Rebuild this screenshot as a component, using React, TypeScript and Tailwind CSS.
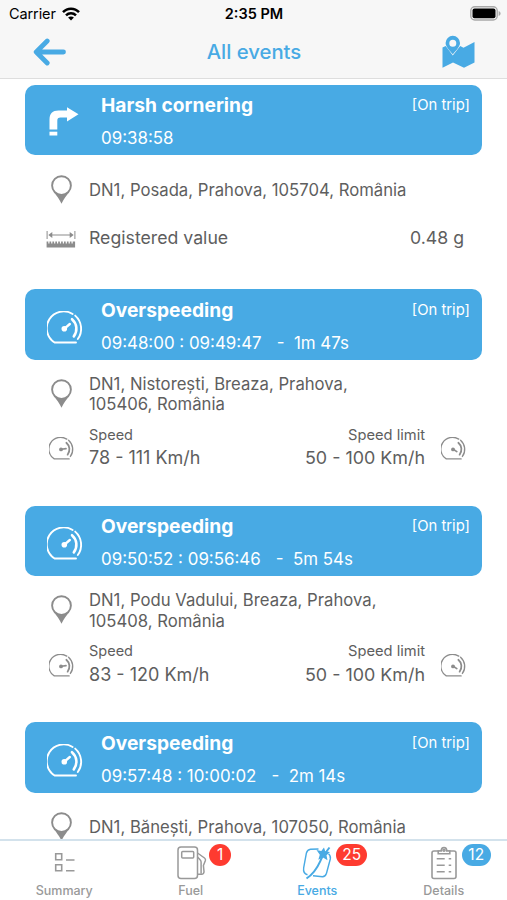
import type { ReactNode } from "react";

type EventItem = {
  type: "cornering" | "speeding";
  title: string;
  time: string;
  duration?: string;
  address: string[];
  registered?: string;
  speed?: string;
  limit?: string;
};

const events: EventItem[] = [
  {
    type: "cornering",
    title: "Harsh cornering",
    time: "09:38:58",
    address: ["DN1, Posada, Prahova, 105704, România"],
    registered: "0.48 g",
  },
  {
    type: "speeding",
    title: "Overspeeding",
    time: "09:48:00 : 09:49:47",
    duration: "1m 47s",
    address: ["DN1, Nistorești, Breaza, Prahova,", "105406, România"],
    speed: "78 - 111 Km/h",
    limit: "50 - 100 Km/h",
  },
  {
    type: "speeding",
    title: "Overspeeding",
    time: "09:50:52 : 09:56:46",
    duration: "5m 54s",
    address: ["DN1, Podu Vadului, Breaza, Prahova,", "105408, România"],
    speed: "83 - 120 Km/h",
    limit: "50 - 100 Km/h",
  },
  {
    type: "speeding",
    title: "Overspeeding",
    time: "09:57:48 : 10:00:02",
    duration: "2m 14s",
    address: ["DN1, Bănești, Prahova, 107050, România"],
  },
];

function WifiIcon() {
  return (
    <svg className="h-[14px] w-[18px]" viewBox="0 0 18 14" fill="none" stroke="#000" strokeWidth="2.5">
      <path d="M1 5.2C5.4 .5 12.6 .5 17 5.2" />
      <path d="M4 8.3C6.8 5.5 11.2 5.5 14 8.3" />
      <path d="M9 13.6L6.1 10.6C7.7 9.1 10.3 9.1 11.9 10.6Z" fill="#000" stroke="none" />
    </svg>
  );
}

function BatteryIcon() {
  return (
    <svg className="h-[15px] w-[31px]" viewBox="0 0 31 15">
      <rect x="0.8" y="0.8" width="26.4" height="13.2" rx="4" fill="#f7f7f7" stroke="#a9a9a9" strokeWidth="1.4" />
      <rect x="2.5" y="2.5" width="23" height="9.8" rx="2" fill="#000" />
      <path d="M28.6 5v5c1.3-.4 2-1.4 2-2.5s-.7-2.1-2-2.5z" fill="#a9a9a9" />
    </svg>
  );
}

function BackIcon() {
  return (
    <svg
      className="h-[28px] w-[34px]"
      viewBox="0 0 34 28"
      fill="none"
      stroke="#48aae4"
      strokeWidth="4.8"
      strokeLinecap="round"
    >
      <path d="M30.5 14H4M14.2 3L3.2 14l11 11" strokeLinejoin="round" />
    </svg>
  );
}

function MapIcon() {
  return (
    <svg className="h-[34px] w-[33px]" viewBox="0 0 33 34" fill="#48aae4">
      <path d="M.5 12.5L3.7 11l7.1 9.5L18.2 11l3.3 1.7L32.5 7v20.5L22 32.8l-11-5.3L.5 32.8z" />
      <path
        fillRule="evenodd"
        d="M10.8.8a7.2 7.2 0 0 1 7.2 7.2c0 3.6-4.2 8-7.2 11.2C7.8 16 3.6 11.6 3.6 8A7.2 7.2 0 0 1 10.8.8zm0 4a3.5 3.5 0 1 0 0 7 3.5 3.5 0 0 0 0-7z"
      />
    </svg>
  );
}

function TurnIcon() {
  return (
    <svg className="h-[29px] w-[30px]" viewBox="0 0 30 29" fill="#fff">
      <path d="M.5 22.5V12.5C.5 6.5 3.5 3.6 9.5 3.6H18V.2l11.5 7L18 14.4v-3.9h-6.5c-2.3 0-3.2 1-3.2 3.2v8.8z" />
      <rect x=".5" y="24.7" width="7.8" height="3.8" />
    </svg>
  );
}

function GaugeIcon({ className, needle, width }: { className: string; needle: string; width: number }) {
  return (
    <svg className={className} viewBox="0 0 36 33" fill="none" stroke="currentColor" strokeWidth={width} strokeLinecap="round">
      <path d="M29 31.5H7.6A16.6 16.6 0 0 1 25.6 3" />
      <path d="M28.2 4.6A17.5 17.5 0 0 1 30.8 28" />
      <path d="M25 8.2A12.6 12.6 0 0 1 26.8 25.4" strokeWidth={width * 1.35} />
      <circle cx="17.3" cy="17.8" r="2.8" fill="currentColor" stroke="none" />
      <path d={needle} strokeWidth={width * 1.25} />
    </svg>
  );
}

function PinIcon() {
  return (
    <svg className="h-[29px] w-[21px]" viewBox="0 0 21 29">
      <circle cx="10.5" cy="10.6" r="9.4" fill="none" stroke="#8c8c8c" strokeWidth="1.9" />
      <path d="M3.2 17.3c4 3.6 10.6 3.6 14.6 0C15.5 21 12.6 24 10.5 28.8 8.4 24 5.5 21 3.2 17.3z" fill="#8c8c8c" />
    </svg>
  );
}

function RulerIcon() {
  return (
    <svg className="h-[18px] w-[30px]" viewBox="0 0 30 18" fill="#8c8c8c">
      <path d="M.6 1h1v8h-1zM28.4 1h1v8h-1zM4 4.5h22v1H4z" />
      <path d="M2.3 5l4-2.9v5.8zM27.7 5l-4-2.9v5.8z" />
      <path d="M.6 11.5h1.7v2h1.2v-2h1.7v2h1.2v-2h1.7v2h1.2v-2H11v2h1.2v-2h1.7v2h1.2v-2h1.7v2H18v-2h1.7v2h1.2v-2h1.7v2h1.2v-2h1.7v2h1.2v-2h2.4v6H.6z" />
    </svg>
  );
}

function EventHeader({ event }: { event: EventItem }) {
  return (
    <div className="flex h-[70.5px] rounded-[10px] bg-[#48aae4] pt-[8.5px] text-white">
      <div className="flex w-[76px] shrink-0 justify-center">
        {event.type === "cornering" ? (
          <div className="pt-[14px] pl-[2px]">
            <TurnIcon />
          </div>
        ) : (
          <div className="pt-[13px] pl-[3px]">
            <GaugeIcon className="h-[33px] w-[36px]" needle="M17.5 17.6L22.8 13" width={1.9} />
          </div>
        )}
      </div>
      <div className="flex-1 whitespace-nowrap">
        <div className="flex justify-between pr-[12px] leading-6">
          <h2 className="text-[19.2px] font-bold">{event.title}</h2>
          <span className="text-[14.8px]">[On trip]</span>
        </div>
        <div className="mt-[11px] flex text-[16.9px] leading-5">
          <span>{event.time}</span>
          {event.duration && <span className="ml-[15px] whitespace-pre">{"-  " + event.duration}</span>}
        </div>
      </div>
    </div>
  );
}

function Speed({ event }: { event: EventItem }) {
  return (
    <div className="mt-[10px] flex items-start pr-[16px] pl-[20px] whitespace-nowrap text-[#5e5e5e]">
      <div className="flex w-[32px] justify-center pt-[12.5px]">
        <GaugeIcon className="h-[23px] w-[25px] text-[#8c8c8c]" needle="M18 17.5L24.5 16.6" width={1.9} />
      </div>
      <div className="ml-[12px] flex-1">
        <p className="text-[14.5px] leading-5">Speed</p>
        <p className="mt-[1.5px] text-[18px] leading-6">{event.speed}</p>
      </div>
      <div className="text-right">
        <p className="text-[14.7px] leading-5">Speed limit</p>
        <p className="mt-[1.5px] text-[17.9px] leading-6">{event.limit}</p>
      </div>
      <div className="ml-[16px] pt-[12.5px]">
        <GaugeIcon className="h-[23px] w-[25px] text-[#8c8c8c]" needle="M17.5 17.5L22.8 21" width={1.9} />
      </div>
    </div>
  );
}

function EventCard({ event }: { event: EventItem }) {
  const twoLines = event.address.length > 1;
  return (
    <section className={event.type === "cornering" ? "h-[204.5px]" : "h-[216.5px]"}>
      <EventHeader event={event} />
      <div className={twoLines ? "flex pt-[14px] pl-[20px]" : "flex pt-[24.5px] pl-[20px]"}>
        <div className={twoLines ? "flex h-[41px] w-[32px] justify-center pt-[5px]" : "-mt-[5px] flex h-[29px] w-[32px] justify-center"}>
          <PinIcon />
        </div>
        <div className="ml-[12px] text-[16.7px] leading-[20.5px] whitespace-nowrap text-[#5e5e5e]">
          {event.address.map((line) => (
            <p key={line}>{line}</p>
          ))}
        </div>
      </div>
      {event.registered && (
        <div className="mt-[23px] flex h-6 items-center pr-[18px] pl-[20px] text-[17.7px] text-[#5e5e5e]">
          <div className="flex w-[32px] justify-center">
            <RulerIcon />
          </div>
          <span className="ml-[12px] flex-1">Registered value</span>
          <span>{event.registered}</span>
        </div>
      )}
      {event.speed && <Speed event={event} />}
    </section>
  );
}

function SummaryIcon() {
  return (
    <svg className="h-[34px] w-[30px]" viewBox="0 0 30 34" fill="none" stroke="#999" strokeWidth="1.6">
      <path d="M6.7 7.7h6v6h-6zM6.7 18.7h6v6h-6zM17 14h8.5M17 24.7h8.5" />
    </svg>
  );
}

function FuelIcon() {
  return (
    <svg className="h-[34px] w-[30px]" viewBox="0 0 30 34" fill="none" stroke="#999" strokeWidth="1.5" strokeLinejoin="round">
      <rect x="1" y="1" width="19.5" height="31.5" rx="3" />
      <rect x="4.7" y="5.5" width="12" height="6.5" rx="1" />
      <path d="M20.5 7l7 5c1 .7 1.2 1.5.9 2.5l-2 5 .6 6c.1 1.5-.9 2.7-2.4 2.7h-4.1" />
      <path d="M20.5 11l2.8 3c.7.7.8 1.3.8 2.3v11.5" />
    </svg>
  );
}

function EventsIcon() {
  return (
    <svg className="h-[34px] w-[30px]" viewBox="0 0 30 34" fill="none" stroke="#48aae4" strokeWidth="1.4">
      <path d="M16.5 3L8.5 3.2C6 3.5 5 5 4.4 7L1.7 21.5c-.6 4 .8 6.5 3.8 7.3M11 29.8l9.5 1c2.3-.1 3.3-1.3 4-3.5L28.3 13c.4-2-.2-4-1.8-5.3" />
      <path d="M27.5 1.5L20 11.5C17 17 15.5 25 4.5 32.5" strokeWidth="2" />
      <path d="M14.5 4l4.8 1L22 1.5l1.2 3.7L28 6l-3.5 3.3 1 5-4.5-2.8-4.7 2.3 1.5-5z" fill="#48aae4" stroke="none" />
    </svg>
  );
}

function DetailsIcon() {
  return (
    <svg className="h-[34px] w-[30px]" viewBox="0 0 30 34" fill="none" stroke="#999" strokeWidth="1.6">
      <rect x="3" y="5" width="24" height="27.5" rx="2" />
      <path d="M9.2 7.8V5h3c0-4.7 5.6-4.7 5.6 0h3v2.8z" fill="#fff" />
      <circle cx="15" cy="4.3" r="1" />
      <path d="M7.7 12.8h8M19.7 12.8h2.5M7.7 19.3h8M19.7 19.3h2.5M7.7 25.8h8M19.7 25.8h2.5" />
    </svg>
  );
}

function Tab({ label, active, badge, children }: { label: string; active?: boolean; badge?: ReactNode; children: ReactNode }) {
  return (
    <div className="flex flex-col items-center pt-[5px]">
      <div className="relative">
        {children}
        {badge}
      </div>
      <span
        className={
          active
            ? "mt-[3px] text-[12.5px] leading-4 font-medium text-[#48aae4]"
            : "mt-[3px] text-[12.5px] leading-4 font-medium text-[#999]"
        }
      >
        {label}
      </span>
    </div>
  );
}

export default function App() {
  return (
    <div className="flex h-[900px] w-[507px] flex-col overflow-hidden bg-white font-['Inter','Liberation_Sans',sans-serif]">
      <header className="h-[79px] shrink-0 border-b border-[#dedede] bg-[#f7f7f7]">
        <div className="grid h-[27px] grid-cols-3 items-center pr-[6px] pl-[9px] text-[14.5px] text-black">
          <div className="flex items-center gap-[6px]">
            <span className="tracking-[-0.1px]">Carrier</span>
            <WifiIcon />
          </div>
          <span className="pr-[2px] text-center font-semibold">2:35 PM</span>
          <div className="flex justify-end">
            <BatteryIcon />
          </div>
        </div>
        <div className="grid h-[50px] grid-cols-3 items-center pr-[32px] pl-[33px]">
          <BackIcon />
          <h1 className="pt-px text-center text-[20.3px] font-medium text-[#48aae4]">All events</h1>
          <div className="flex justify-end">
            <MapIcon />
          </div>
        </div>
      </header>

      <main className="h-[760px] shrink-0 overflow-hidden px-[25px] pt-[5.5px]">
        {events.map((event) => (
          <EventCard key={event.time} event={event} />
        ))}
      </main>

      <nav className="grid h-[61px] shrink-0 grid-cols-4 border-t-2 border-[#d3e2ec] bg-white pl-px">
        <Tab label="Summary">
          <SummaryIcon />
        </Tab>
        <Tab
          label="Fuel"
          badge={
            <span className="absolute -top-[2px] left-[35px] flex h-[22px] w-[22px] items-center justify-center rounded-full bg-[#fe3b30] text-[15.5px] text-white">
              1
            </span>
          }
        >
          <div className="pl-[3px]">
            <FuelIcon />
          </div>
        </Tab>
        <Tab
          label="Events"
          active
          badge={
            <span className="absolute -top-[2px] left-[34px] flex h-[22px] w-[31px] items-center justify-center rounded-full bg-[#fe3b30] text-[15.5px] text-white">
              25
            </span>
          }
        >
          <EventsIcon />
        </Tab>
        <Tab
          label="Details"
          badge={
            <span className="absolute -top-[2px] left-[33px] flex h-[22px] w-[29px] items-center justify-center rounded-full bg-[#48aae4] text-[15.5px] text-white">
              12
            </span>
          }
        >
          <DetailsIcon />
        </Tab>
      </nav>
    </div>
  );
}
